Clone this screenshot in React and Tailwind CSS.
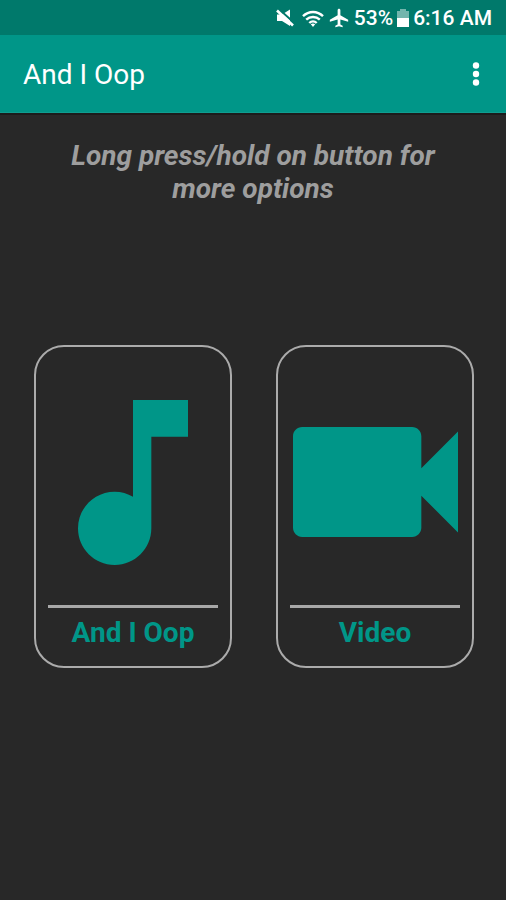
import React from "react";
import { MdAirplanemodeActive } from "react-icons/md";

function MuteIcon() {
  return (
    <svg viewBox="0 0 18 18" className="w-[18px] h-[18px]" fill="currentColor" aria-hidden="true">
      <path d="M1 5.500h5L14 .5v16.500l-8-5H1z" />
      <path d="M1 -1.500l18 16" stroke="#00796b" strokeWidth="2" />
      <path d="M1 1.500l16 15" stroke="currentColor" strokeWidth="2.600" />
    </svg>
  );
}

function WifiIcon() {
  return (
    <svg viewBox="0 0 22 17" className="w-[22px] h-[17px]" fill="none" stroke="currentColor" strokeWidth="2.400" aria-hidden="true">
      <path d="M1 6.200c5.700-5.600 14.300-5.600 20 0" />
      <path d="M4.200 9.700c3.900-3.700 9.700-3.700 13.600 0" />
      <path d="M7.300 13c2.100-2 5.300-2 7.400 0" />
      <path d="M8.800 14.200L11 17l2.200-2.800c-1.300-1-3.100-1-4.400 0z" fill="currentColor" stroke="none" />
    </svg>
  );
}

function BatteryIcon() {
  return (
    <svg viewBox="0 0 12 18" className="w-3 h-[18px]" fill="currentColor" aria-hidden="true">
      <path d="M3 0h6v2h3v7H0V2h3z" opacity="0.45" />
      <path d="M0 9h12v9H0z" />
    </svg>
  );
}

function MoreIcon() {
  return (
    <svg viewBox="0 0 8 24" className="w-2 h-6" fill="currentColor" aria-hidden="true">
      <circle cx="4" cy="3.500" r="3.200" />
      <circle cx="4" cy="12" r="3.200" />
      <circle cx="4" cy="20.500" r="3.200" />
    </svg>
  );
}

function NoteIcon() {
  return (
    <svg viewBox="6 3 12 18" className="w-[110px] h-[165px]" fill="currentColor" aria-hidden="true">
      <path d="M12 3v10.550c-.59-.34-1.270-.55-2-.55-2.210 0-4 1.790-4 4s1.790 4 4 4 4-1.790 4-4V7h4V3h-6z" />
    </svg>
  );
}

function VideoIcon() {
  return (
    <svg viewBox="3 6 18 12" className="w-[165px] h-[110px]" fill="currentColor" aria-hidden="true">
      <path d="M17 10.500V7c0-.55-.45-1-1-1H4c-.55 0-1 .45-1 1v10c0 .55.450 1 1 1h12c.55 0 1-.45 1-1v-3.500l4 4v-11l-4 4z" />
    </svg>
  );
}

function OptionCard({ label, children }) {
  return (
    <button
      type="button"
      className="flex flex-col flex-1 items-center px-3 pb-[15px] rounded-[30px] border-2 border-[#ababab] text-[#009688]"
    >
      <span className="flex items-center justify-center w-full h-[258px] pt-3">{children}</span>
      <span className="w-full border-t-[3px] border-[#a8a8a8]" />
      <span className="mt-[7px] text-[28px] leading-9 font-bold">{label}</span>
    </button>
  );
}

export default function App() {
  return (
    <div className="min-h-screen w-full bg-[#282828] font-['Roboto',sans-serif]">
      <div className="flex items-center justify-end h-[35px] pt-px pr-[14px] bg-[#00796b] text-white text-[21px] leading-6 font-medium">
        <MuteIcon />
        <span className="ml-2 mr-1">
          <WifiIcon />
        </span>
        <MdAirplanemodeActive size={22} />
        <span className="ml-1">53%</span>
        <span className="mx-1">
          <BatteryIcon />
        </span>
        <span>6:16 AM</span>
      </div>

      <header className="flex items-center justify-between h-[78px] pl-[23px] pr-[26px] bg-[#009688] text-white border-b border-[#109d90]">
        <h1 className="pt-[2px] text-[28px] leading-8">And I Oop</h1>
        <button type="button" aria-label="More options">
          <MoreIcon />
        </button>
      </header>

      <main className="border-t-2 border-[#1c1c1c]">
        <p className="px-12 pt-6 text-center text-[28px] leading-[33px] font-bold italic text-[#9e9e9e]">
          Long press/hold on button for more options
        </p>

        <div className="flex gap-11 mt-[140px] pl-[34px] pr-8">
          <OptionCard label="And I Oop">
            <NoteIcon />
          </OptionCard>
          <OptionCard label="Video">
            <VideoIcon />
          </OptionCard>
        </div>
      </main>
    </div>
  );
}
